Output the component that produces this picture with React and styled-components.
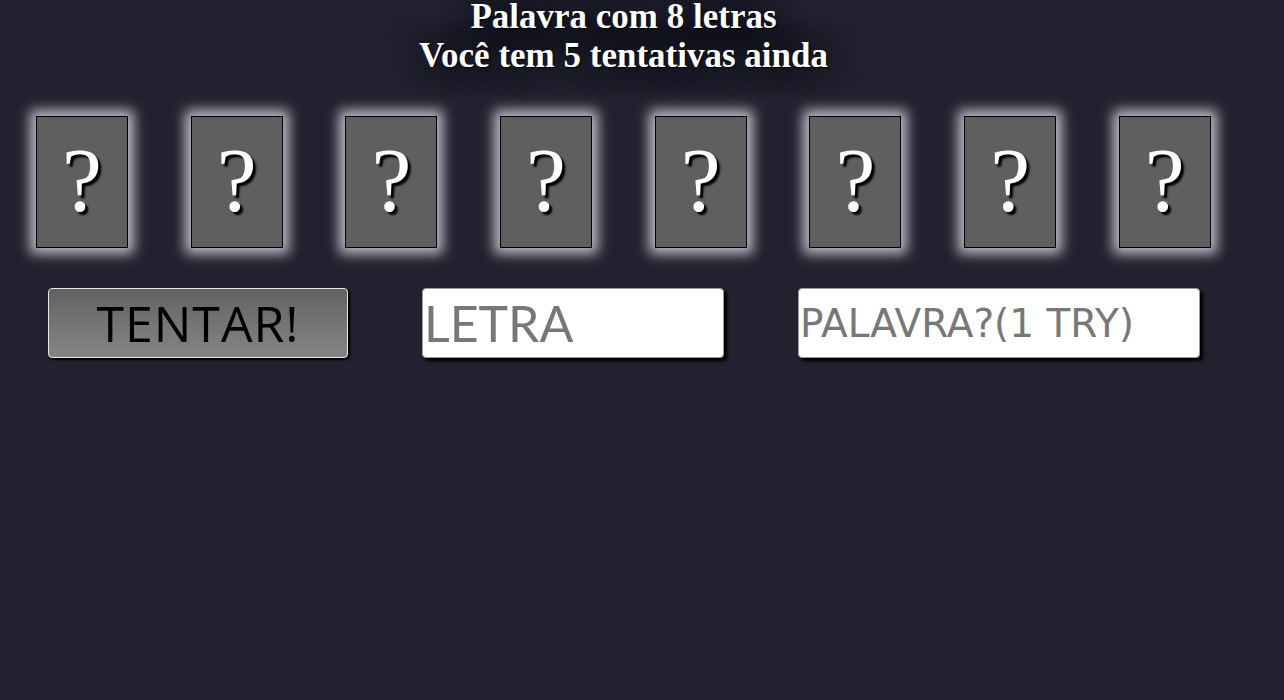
import React from 'react';
import styled, { createGlobalStyle } from 'styled-components';

const GlobalStyle = createGlobalStyle`
  html, body {
    margin: 0;
    padding: 0;
    background: #21212f;
  }
  body {
    font-family: "Liberation Serif", serif;
    min-height: 700px;
  }
`;

export const Page = styled.div`
  width: 1247px;
  display: flex;
  flex-direction: column;
`;

export const Header = styled.div`
  text-align: center;
  color: #fff;
  font-family: "Liberation Serif", serif;
  font-weight: 700;
  font-size: 35px;
  text-shadow: 1px 1px 1px #000, 0 0 22px #15151f, 0 0 30px #15151f;
`;

export const HeaderLine = styled.div`
  line-height: ${p => p.$lh}px;
`;

export const CardRow = styled.div`
  display: flex;
  gap: 62.7px;
  padding: 38px 0 0 36px;
`;

export const Card = styled.div`
  width: 90px;
  height: 130px;
  flex-shrink: 0;
  background: #5d605f;
  border: 1px solid #000;
  box-shadow: 0 0 12px 6px rgba(228, 228, 238, 0.8);
  display: flex;
  align-items: center;
  justify-content: center;
`;

export const Mark = styled.span`
  font-family: "Liberation Serif", serif;
  font-size: 90px;
  color: #fff;
  text-shadow: 3px 3px 2px #000;
  line-height: 1;
  margin-top: -2px;
`;

export const Controls = styled.div`
  display: flex;
  align-items: center;
  gap: 74px;
  padding: 40px 0 0 48px;
`;

export const TryButton = styled.button`
  width: 300px;
  height: 70px;
  box-sizing: border-box;
  border: 1px solid #e8e8e8;
  border-radius: 4px;
  background: linear-gradient(#626262, #858585);
  box-shadow: 2px 2px 2px #000;
  color: #000;
  font-family: "Open Sans", sans-serif;
  font-size: 50px;
  letter-spacing: 1px;
  padding: 0;
  line-height: 66px;
`;

export const Field = styled.input`
  width: ${p => p.$w}px;
  height: 70px;
  box-sizing: border-box;
  border: 1px solid #999;
  border-radius: 4px;
  background: #fff;
  box-shadow: 3px 3px 3px #000;
  padding: 0 1px;
  font-family: ${p => p.$font};
  font-size: ${p => p.$size}px;
  outline: none;
  &::placeholder {
    color: #777;
  }
`;

const App = () => {
  const letters = Array.from({ length: 8 });
  return (
    <>
      <GlobalStyle />
      <Page>
        <Header>
          <HeaderLine $lh={34}>Palavra com 8 letras</HeaderLine>
          <HeaderLine $lh={44}>Você tem 5 tentativas ainda</HeaderLine>
        </Header>
        <CardRow>
          {letters.map((_, i) => (
            <Card key={i}><Mark>?</Mark></Card>
          ))}
        </CardRow>
        <Controls>
          <TryButton>TENTAR!</TryButton>
          <Field $w={302} $size={50} $font={'Lato, sans-serif'} placeholder="LETRA" />
          <Field $w={402} $size={39} $font={'"DejaVu Sans", sans-serif'} placeholder="PALAVRA?(1 TRY)" />
        </Controls>
      </Page>
    </>
  );
};

export default App;
